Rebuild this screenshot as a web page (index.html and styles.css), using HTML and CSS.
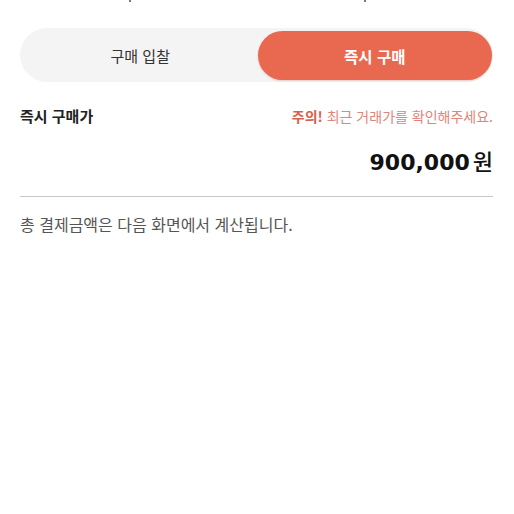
FILE: index.html
```html
<!DOCTYPE html>
<html lang="ko">
<head>
  <meta charset="UTF-8" />
  <meta name="viewport" content="width=device-width, initial-scale=1.0"/>
  <title>즉시 구매</title>
  <link rel="stylesheet" href="styles.css">
</head>
<body>
  <div class="top-strip">
    <span class="tick"></span>
    <span class="tick"></span>
  </div>

  <div class="toggle">
    <button class="tab">구매 입찰</button>
    <button class="tab active">즉시 구매</button>
  </div>

  <div class="price-header">
    <span class="label">즉시 구매가</span>
    <span class="notice"><strong>주의!</strong> 최근 거래가를 확인해주세요.</span>
  </div>

  <div class="price">
    <span class="amount">900,000</span><span class="unit">원</span>
  </div>

  <hr class="divider">

  <p class="note">총 결제금액은 다음 화면에서 계산됩니다.</p>
</body>
</html>
```

FILE: styles.css
```css
body { margin: 0; padding: 0 21px 0 20px; background: #fff; color: #111; font-family: "Noto Sans CJK KR", "Noto Sans", sans-serif; }

.top-strip { display: flex; height: 2px; padding-left: 109px; gap: 233px; }
.tick { width: 2px; height: 2px; background: #777; }

.toggle { display: grid; grid-template-columns: 1fr 1fr; height: 54px; margin-top: 26px; padding: 3px 1px 2px 3px; box-sizing: border-box; background: #f4f4f4; border-radius: 27px; }
.tab { border: none; background: none; font-family: inherit; font-size: 15px; color: #333; border-radius: 25px; padding: 0; }
.tab.active { background: #e8694f; color: #fff; font-weight: 700; font-size: 15.5px; box-shadow: 0 1px 2px rgba(200, 80, 50, 0.25); }

.price-header { display: flex; justify-content: space-between; align-items: center; margin-top: 23px; line-height: 22px; }
.label { font-size: 15px; font-weight: 700; color: #222; }
.notice { font-size: 14px; color: #e0857a; }
.notice strong { color: #d8604f; }

.price { display: flex; justify-content: flex-end; align-items: baseline; margin-top: 17px; line-height: 32px; }
.amount { font-family: "DejaVu Sans", sans-serif; font-size: 22px; font-weight: 700; color: #111; }
.unit { font-size: 22px; font-weight: 500; color: #111; margin-left: 3px; }

.divider { border: none; border-top: 1px solid #c8c8c8; margin: 17px 0 0; }

.note { margin: 16px 0 0; font-size: 16px; line-height: 22px; color: #555; }
```
